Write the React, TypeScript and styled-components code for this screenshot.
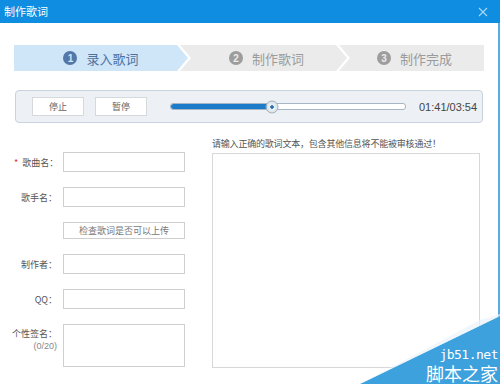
import styled, { createGlobalStyle } from "styled-components"

const GlobalStyle = createGlobalStyle`
    html, body {
        margin: 0;
        padding: 0;
        background: #ffffff;
    }
    body {
        font-family: "Noto Sans CJK SC", "Liberation Sans", sans-serif;
        font-size: 9px;
        color: #555;
    }
`

const steps = [
    { num: "1", label: "录入歌词", active: true, width: "174px" },
    { num: "2", label: "制作歌词", active: false, width: "161px" },
    { num: "3", label: "制作完成", active: false, width: "auto" },
]

const fields = [
    { label: "歌曲名：", required: true },
    { label: "歌手名：", required: false },
]

const App = () => {
    const progress = 101 / 234
    return (
        <>
            <GlobalStyle />
            <Window>
                <TitleBar>
                    <Title>制作歌词</Title>
                    <Close viewBox="0 0 10 10" width="10" height="10">
                        <path d="M1 1 L9 9 M9 1 L1 9" stroke="#a9d9f7" strokeWidth="1.1" />
                    </Close>
                </TitleBar>
                <Body>
                    <Steps>
                        {steps.map((s, i) => (
                            <Step key={s.num} $active={s.active} $first={i === 0} $last={i === steps.length - 1} $width={s.width}>
                                <StepNum $active={s.active}>{s.num}</StepNum>
                                {s.label}
                            </Step>
                        ))}
                    </Steps>
                    <Player>
                        <PlayerButton>停止</PlayerButton>
                        <PlayerButton>暂停</PlayerButton>
                        <Track>
                            <TrackFill style={{ width: `${progress * 100}%` }} />
                            <Thumb style={{ left: `${progress * 100}%` }} />
                        </Track>
                        <Time>01:41/03:54</Time>
                    </Player>
                    <Content>
                        <Form>
                            {fields.map(f => (
                                <Row key={f.label}>
                                    <Label>{f.required && <Star>*</Star>}{f.label}</Label>
                                    <Input />
                                </Row>
                            ))}
                            <Row $top="15px">
                                <span />
                                <CheckButton>检查歌词是否可以上传</CheckButton>
                            </Row>
                            <Row $top="13px">
                                <Label>制作者：</Label>
                                <Input />
                            </Row>
                            <Row $top="14px">
                                <Label>QQ：</Label>
                                <Input />
                            </Row>
                            <Row $top="15px" $align="start">
                                <LabelStack>
                                    <Label>个性签名：</Label>
                                    <Count>(0/20)</Count>
                                </LabelStack>
                                <Signature />
                            </Row>
                        </Form>
                        <Lyrics>
                            <Hint>请输入正确的歌词文本，包含其他信息将不能被审核通过！</Hint>
                            <LyricsBox />
                        </Lyrics>
                    </Content>
                </Body>
                <Watermark>
                    <svg width="140" height="70" viewBox="0 0 140 70">
                        <polygon points="0,70 140,2 140,70" fill="#3da1dd" />
                        <polygon points="0,70 140,2 140,0 120,6" fill="#eaf4fb" opacity="0.7" />
                    </svg>
                    <MarkText>
                        <MarkSite>jb51.net</MarkSite>
                        <MarkName>脚本之家</MarkName>
                    </MarkText>
                </Watermark>
            </Window>
        </>
    )
}

export default App

const Window = styled.div`
    position: relative;
    width: 500px;
    height: 384px;
    overflow: hidden;
    display: flex;
    flex-direction: column;
    background: #ffffff;
`

const TitleBar = styled.div`
    height: 23px;
    flex-shrink: 0;
    display: flex;
    align-items: center;
    justify-content: space-between;
    padding: 0 12px 0 4px;
    background: #0f8de1;
`

const Title = styled.span`
    color: #ffffff;
    font-size: 11px;
    line-height: 23px;
`

const Close = styled.svg`
    display: block;
`

const Body = styled.div`
    flex: 1;
    display: flex;
    flex-direction: column;
    padding: 22px 15px 0 14px;
    border-right: 2px solid #5aaae4;
`

const Steps = styled.div`
    display: flex;
    height: 26px;
    width: 470px;
`

const Step = styled.div<{ $active: boolean; $first: boolean; $last: boolean; $width: string }>`
    flex: ${p => (p.$width === "auto" ? "1" : "none")};
    width: ${p => p.$width};
    margin-left: ${p => (p.$first ? "0" : "-8px")};
    display: flex;
    align-items: center;
    justify-content: center;
    gap: 9px;
    padding-left: ${p => (p.$first ? "0" : "6px")};
    font-size: 13px;
    color: ${p => (p.$active ? "#4d72a0" : "#9b9b9b")};
    background: ${p => (p.$active ? "#cfe5f8" : "#ebebeb")};
    clip-path: ${p => {
        const left = p.$first ? "0 100%" : "0 100%, 11px 50%"
        const right = p.$last ? "100% 0, 100% 100%" : "calc(100% - 11px) 0, 100% 50%, calc(100% - 11px) 100%"
        return `polygon(0 0, ${right}, ${left})`
    }};
`

const StepNum = styled.span<{ $active: boolean }>`
    width: 14px;
    height: 14px;
    border-radius: 50%;
    display: inline-flex;
    align-items: center;
    justify-content: center;
    font-family: "Liberation Sans", sans-serif;
    font-size: 10px;
    font-weight: 700;
    color: ${p => (p.$active ? "#cfe5f8" : "#ebebeb")};
    background: ${p => (p.$active ? "#5377a6" : "#9d9d9d")};
`

const Player = styled.div`
    margin-top: 19px;
    margin-left: 1px;
    width: 468px;
    height: 33px;
    display: flex;
    align-items: center;
    padding-left: 16px;
    box-sizing: border-box;
    background: #edf1f5;
    border: 1px solid #c9d3dd;
    border-radius: 4px;
`

const PlayerButton = styled.button`
    width: 52px;
    height: 19px;
    margin-right: 11px;
    padding: 0;
    font-family: "Noto Sans CJK SC", sans-serif;
    font-size: 9px;
    color: #666;
    background: #ffffff;
    border: 1px solid #d6d9dc;
`

const Track = styled.div`
    position: relative;
    margin-left: 12px;
    width: 234px;
    height: 5px;
    border-radius: 3px;
    background: #ffffff;
    border: 1px solid #a8b6c3;
`

const TrackFill = styled.div`
    height: 100%;
    border-radius: 3px;
    background: #1d7cc9;
`

const Thumb = styled.div`
    position: absolute;
    top: 50%;
    width: 11px;
    height: 11px;
    border-radius: 50%;
    transform: translate(-50%, -50%);
    background: radial-gradient(circle, #2a6fb0 0 1.5px, #eef3f7 2px, #c9d4de 100%);
    border: 1px solid #9fb0c0;
`

const Time = styled.span`
    margin-left: 13px;
    font-family: "Liberation Sans", sans-serif;
    font-size: 11px;
    color: #444;
`

const Content = styled.div`
    display: flex;
    margin-top: 14px;
    gap: 27px;
`

const Form = styled.div`
    width: 171px;
    padding-top: 15px;
    display: flex;
    flex-direction: column;
`

const Row = styled.div<{ $top?: string; $align?: string }>`
    display: grid;
    grid-template-columns: 43px 122px;
    column-gap: 6px;
    align-items: ${p => p.$align || "center"};
    margin-top: ${p => p.$top || "0"};
    & + & {
        margin-top: ${p => p.$top || "15px"};
    }
`

const Label = styled.span`
    text-align: right;
    white-space: nowrap;
    font-size: 9px;
    color: #555;
`

const LabelStack = styled.div`
    display: flex;
    flex-direction: column;
    align-items: flex-end;
    padding-top: 3px;
    line-height: 13px;
`

const Count = styled.span`
    font-family: "Liberation Sans", sans-serif;
    font-size: 9px;
    color: #888;
`

const Star = styled.span`
    color: #e0303a;
    margin-right: 4px;
`

const Input = styled.div`
    height: 20px;
    box-sizing: border-box;
    border: 1px solid #cfcfcf;
    background: #ffffff;
`

const CheckButton = styled.div`
    height: 17px;
    box-sizing: border-box;
    display: flex;
    align-items: center;
    justify-content: center;
    font-size: 9px;
    color: #777;
    border: 1px solid #cfcfcf;
    background: #ffffff;
`

const Signature = styled(Input)`
    height: 43px;
`

const Lyrics = styled.div`
    display: flex;
    flex-direction: column;
    width: 268px;
`

const Hint = styled.span`
    font-size: 9px;
    line-height: 13px;
    letter-spacing: -0.2px;
    color: #555;
    white-space: nowrap;
`

const LyricsBox = styled.div`
    margin-top: 3px;
    height: 213px;
    border: 1px solid #d8d8d8;
    background: #ffffff;
`

const Watermark = styled.div`
    position: absolute;
    right: 0;
    bottom: 0;
    width: 140px;
    height: 70px;
    svg {
        display: block;
    }
`

const MarkText = styled.div`
    position: absolute;
    right: 2px;
    bottom: 0;
    display: flex;
    flex-direction: column;
    align-items: flex-end;
    color: #ffffff;
`

const MarkSite = styled.span`
    font-family: "DejaVu Sans Mono", monospace;
    font-size: 13px;
    line-height: 14px;
    letter-spacing: -0.5px;
`

const MarkName = styled.span`
    font-family: "Noto Sans CJK SC", sans-serif;
    font-size: 18px;
    line-height: 22px;
`
